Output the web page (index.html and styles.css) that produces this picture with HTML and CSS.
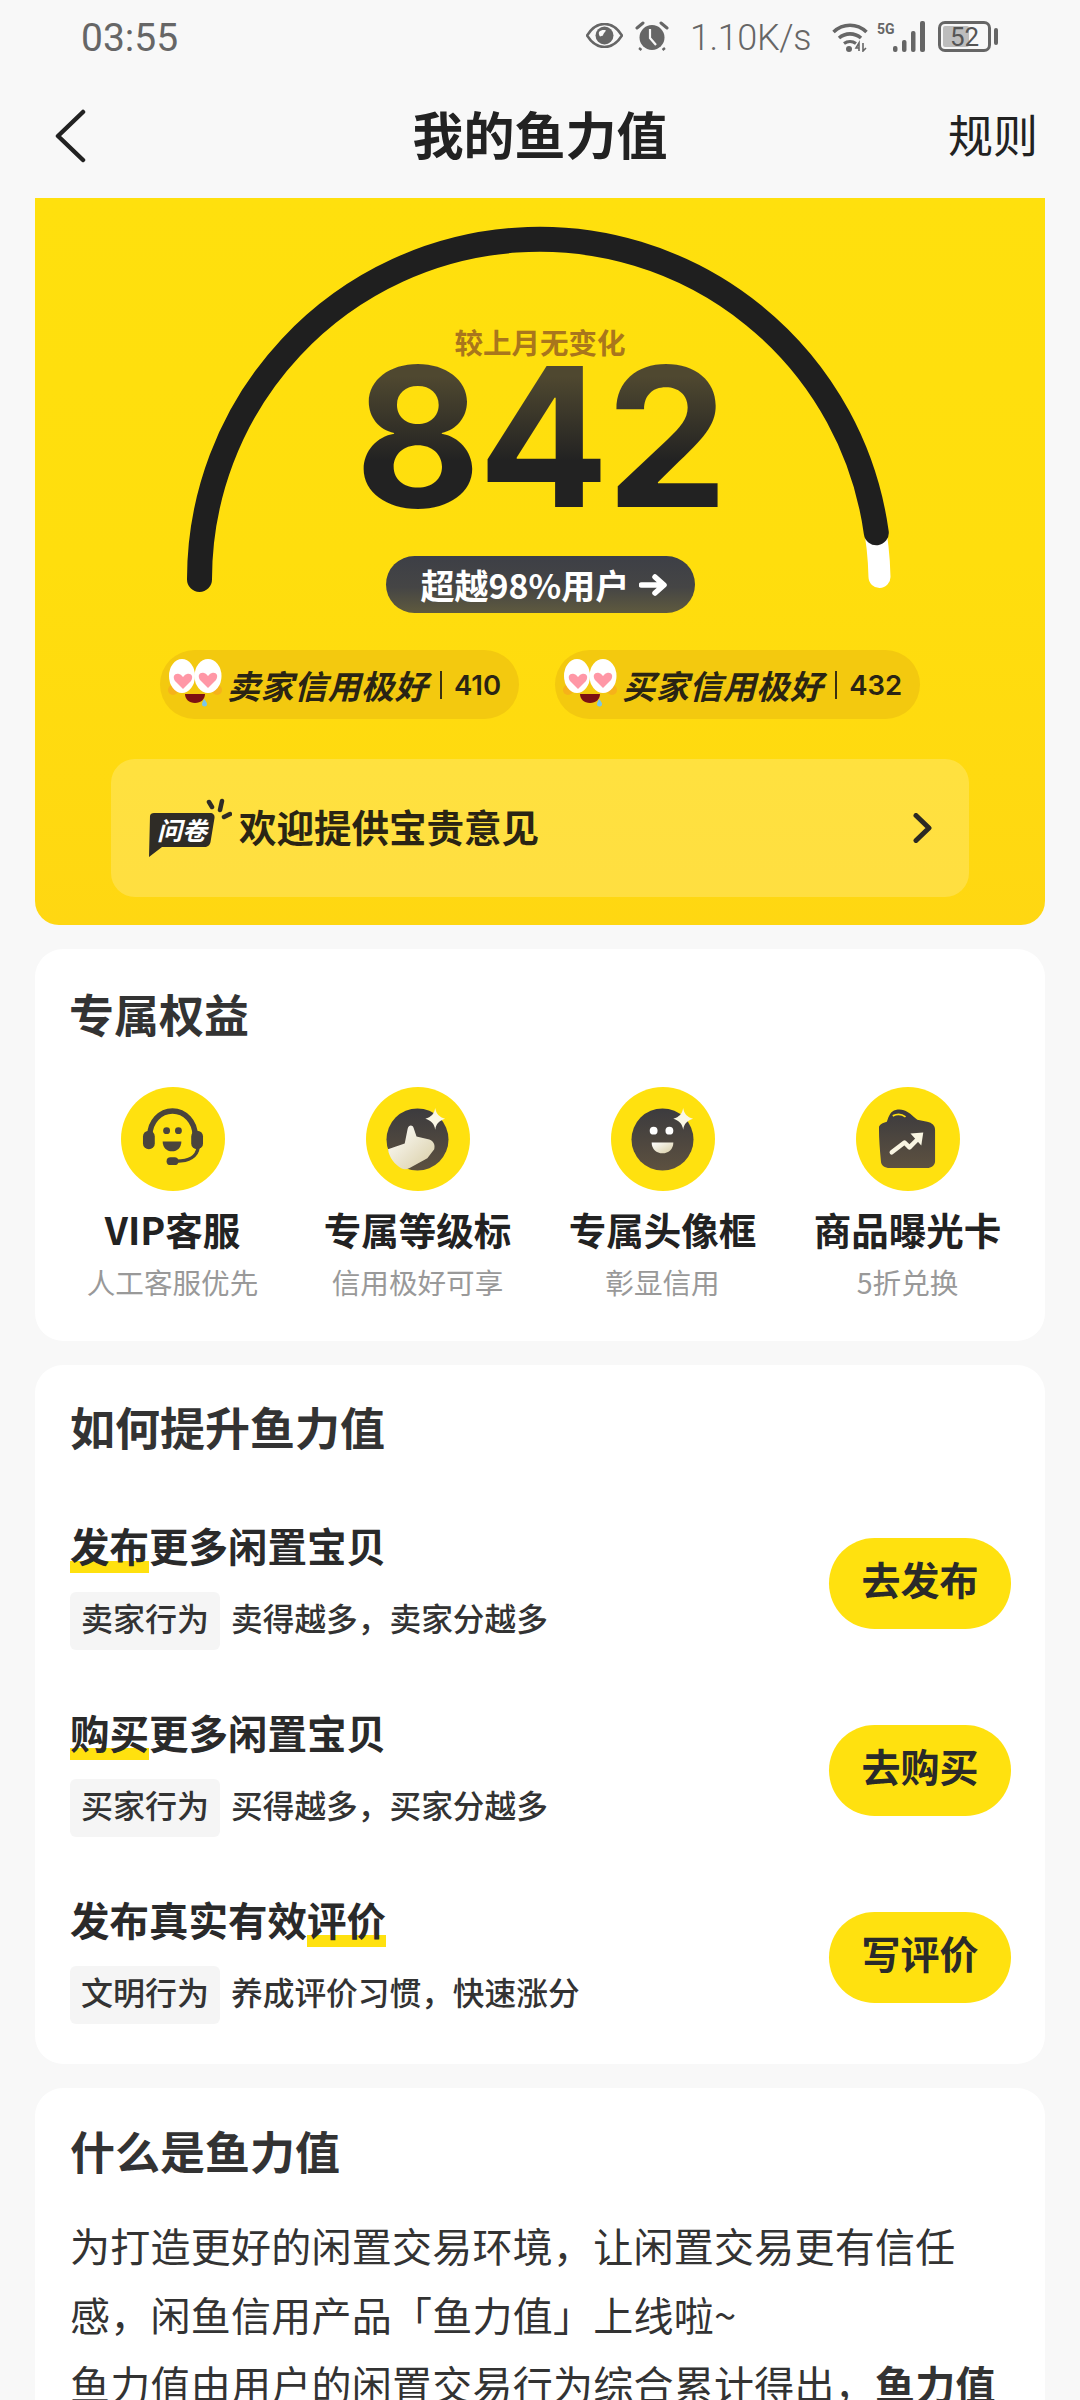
FILE: index.html
```html
<!DOCTYPE html>
<html lang="zh-CN">
<head>
<meta charset="utf-8">
<title>我的鱼力值</title>
<link rel="stylesheet" href="styles.css">
</head>
<body>
<div class="page">
  <div class="status">
    <span class="time">03:55</span>
    <div class="status-right">
      <svg class="ic-eye" viewBox="0 0 37 25"><path d="M1 12.500C6 4.500 12 1 18.500 1S31 4.500 36 12.500C31 20.500 25 24 18.500 24S6 20.500 1 12.500Z" fill="none" stroke="#666" stroke-width="2.600"/><circle cx="18.500" cy="12.500" r="9" fill="#666"/><path d="M13 9c2-2 5-2.500 7-1.500-1 2-3 3-3 5l-3 1c-1-1.500-1.500-3-1-4.500Z" fill="#f8f8f8"/></svg>
      <svg class="ic-alarm" viewBox="0 0 34 30"><circle cx="17" cy="16.500" r="12.500" fill="#666"/><path d="M2 7 8 2M32 7 26 2" stroke="#666" stroke-width="3" stroke-linecap="round"/><path d="M6 27 4.500 29M28 27l1.500 2" stroke="#666" stroke-width="3"/><path d="M15 8v9l6 7" fill="none" stroke="#f8f8f8" stroke-width="2.200"/></svg>
      <span class="speed">1.10K/s</span>
      <svg class="ic-wifi" viewBox="0 0 36 31"><path d="M1.500 11C11 2 25 2 34.500 11" fill="none" stroke="#666" stroke-width="3.600"/><path d="M7 17c6.500-5.500 15.500-5.500 22 0" fill="none" stroke="#666" stroke-width="3.600"/><path d="M12 22.500c3.500-2.500 8.500-2.500 12 0" fill="none" stroke="#666" stroke-width="3.200"/><circle cx="17" cy="28" r="3" fill="#666"/><path d="M27 30v-8l-3 5h3M31 22v8l3-3" fill="none" stroke="#666" stroke-width="1.600"/></svg>
      <div class="cell">
        <span class="five-g">5G</span>
        <svg class="ic-signal" viewBox="0 0 33 31"><rect x="0" y="25" width="4.500" height="6" rx="2" fill="#666"/><rect x="9" y="19" width="4.500" height="12" rx="2" fill="#666"/><rect x="18" y="10" width="4.500" height="21" rx="2" fill="#666"/><rect x="27" y="0" width="5" height="31" rx="2" fill="#666"/></svg>
      </div>
      <div class="battery"><div class="battery-fill" style="width:26px"></div><span class="battery-text">52</span></div>
      <span class="battery-nub"></span>
    </div>
  </div>

  <div class="nav">
    <svg class="back" viewBox="0 0 32 54"><path d="M29 3 4 27l25 24" fill="none" stroke="#222" stroke-width="4.500" stroke-linecap="round" stroke-linejoin="round"/></svg>
    <h1 class="nav-title">我的鱼力值</h1>
    <span class="nav-rule">规则</span>
  </div>

  <section class="hero">
    <div class="gauge">
      <svg class="gauge-arc" viewBox="0 0 1010 416">
        <path d="M844.500 379A340 340 0 0 0 838 320" fill="none" stroke="#fff" stroke-width="22" stroke-linecap="round"/>
        <path d="M164.500 381.500A340 340 0 0 1 841.300 334.800" fill="none" stroke="#1f1f1f" stroke-width="25" stroke-linecap="round"/>
      </svg>
      <div class="gauge-note">较上月无变化</div>
      <div class="gauge-score">842</div>
      <div class="gauge-pill"><span>超越98%用户</span><svg class="pill-arrow" viewBox="0 0 30 24"><path d="M2.500 12h22M16 4l9 8-9 8" fill="none" stroke="#fff" stroke-width="5.500" stroke-linecap="round" stroke-linejoin="round"/></svg></div>
    </div>
    <div class="badges">
      <div class="badge">
        <svg class="face" viewBox="0 0 54 48"><ellipse cx="5" cy="31" rx="5" ry="5" fill="#f6b21a"/><ellipse cx="49" cy="31" rx="5" ry="5" fill="#f6b21a"/><ellipse cx="14" cy="17" rx="13" ry="17" fill="#fff"/><ellipse cx="40" cy="17" rx="13.500" ry="17" fill="#fff"/><path d="M15 30 7 22C4 17 7 14 11 15c2 .500 3 2 4 3 1-1 2-2.500 4-3 4-1 7 2 4 7Z" fill="#ff97a6"/><path d="M40 29l-8-8c-3-5 0-8 4-7 2 .500 3 2 4 3 1-1 2-2.500 4-3 4-1 7 2 4 7Z" fill="#ff97a6"/><path d="M17 35h20c0 5-4 9-10 9s-10-4-10-9Z" fill="#7d1012"/><path d="M36 40c2 2 3 4 3 5a2.500 2.500 0 0 1-5 0c0-1 1-3 2-5Z" fill="#7cc6e8"/></svg>
        <span class="badge-name">卖家信用极好</span><span class="badge-sep"></span><span class="badge-num">410</span>
      </div>
      <div class="badge">
        <svg class="face" viewBox="0 0 54 48"><ellipse cx="5" cy="31" rx="5" ry="5" fill="#f6b21a"/><ellipse cx="49" cy="31" rx="5" ry="5" fill="#f6b21a"/><ellipse cx="14" cy="17" rx="13" ry="17" fill="#fff"/><ellipse cx="40" cy="17" rx="13.500" ry="17" fill="#fff"/><path d="M15 30 7 22C4 17 7 14 11 15c2 .500 3 2 4 3 1-1 2-2.500 4-3 4-1 7 2 4 7Z" fill="#ff97a6"/><path d="M40 29l-8-8c-3-5 0-8 4-7 2 .500 3 2 4 3 1-1 2-2.500 4-3 4-1 7 2 4 7Z" fill="#ff97a6"/><path d="M17 35h20c0 5-4 9-10 9s-10-4-10-9Z" fill="#7d1012"/><path d="M36 40c2 2 3 4 3 5a2.500 2.500 0 0 1-5 0c0-1 1-3 2-5Z" fill="#7cc6e8"/></svg>
        <span class="badge-name">买家信用极好</span><span class="badge-sep"></span><span class="badge-num">432</span>
      </div>
    </div>
    <div class="survey">
      <svg class="survey-icon" viewBox="0 0 84 60"><path d="M6 15h56c3 0 5 2 4.500 5l-4 24c-.500 3-3 5-6 5H14L1 59 2 18c0-2 2-3 4-3Z" fill="#2f2c26"/><text class="survey-icon-text" x="34" y="42" text-anchor="middle">问卷</text><path d="M64 9 61 4M72 12l2-9M76 19l6-3" fill="none" stroke="#2f2c26" stroke-width="4.500" stroke-linecap="round"/></svg>
      <span class="survey-text">欢迎提供宝贵意见</span>
      <svg class="survey-chevron" viewBox="0 0 20 30"><path d="M3 2.500 16 15 3 27.500" fill="none" stroke="#2b2a24" stroke-width="5" stroke-linecap="round" stroke-linejoin="round"/></svg>
    </div>
  </section>

  <section class="card card-benefits">
    <h2 class="card-title">专属权益</h2>
    <div class="benefits">
      <div class="benefit">
        <div class="benefit-circle">
          <svg class="benefit-ic" viewBox="0 0 64 64"><path d="M9 28A23 25 0 0 1 55 28" fill="none" stroke="#4a443c" stroke-width="5.500"/><rect x="2" y="23" width="12" height="19" rx="6" fill="#4a443c"/><rect x="51" y="23" width="12" height="19" rx="6" fill="#4a443c"/><path d="M58 40c-1 9-9 14-22 14" fill="none" stroke="#4a443c" stroke-width="3.500"/><rect x="26" y="50" width="12" height="8" rx="4" fill="#4a443c"/><circle cx="26" cy="23" r="3.500" fill="#4a443c"/><circle cx="38" cy="23" r="3.500" fill="#4a443c"/><path d="M22 34h19c0 6-4 10-9.500 10S22 40 22 34Z" fill="#4a443c"/></svg>
        </div>
        <div class="benefit-name">VIP客服</div>
        <div class="benefit-sub">人工客服优先</div>
      </div>
      <div class="benefit">
        <div class="benefit-circle">
          <svg class="benefit-ic" viewBox="0 0 64 64"><defs><linearGradient id="dk" x1="0" y1="0" x2="0" y2="1"><stop offset="0" stop-color="#3c3b3e"/><stop offset="1" stop-color="#5d5140"/></linearGradient><linearGradient id="lt" x1="0" y1="0" x2="1" y2="1"><stop offset="0" stop-color="#fff"/><stop offset="1" stop-color="#d8cda4"/></linearGradient></defs><circle cx="32" cy="32" r="31.500" fill="url(#dk)"/><path d="M2 42 19 36 22 21C23 17 27 17 28 20L31 29 44 32C49 34 50 38 49 42L42 51 24 61C21 62.500 18 62.500 16 61.500 9 58 3 50 2 42Z" fill="url(#lt)"/><path d="M50 0c1 6 4 9 10 11-6 2-9 5-10 11-1-6-4-9-10-11 6-2 9-5 10-11Z" fill="#fbf8e6"/></svg>
        </div>
        <div class="benefit-name">专属等级标</div>
        <div class="benefit-sub">信用极好可享</div>
      </div>
      <div class="benefit">
        <div class="benefit-circle">
          <svg class="benefit-ic" viewBox="0 0 64 64"><circle cx="32" cy="32" r="31.500" fill="url(#dk)"/><circle cx="23" cy="23" r="4" fill="#fff"/><circle cx="39" cy="23" r="4" fill="#fff"/><path d="M21 35h22c0 7-5 11-11 11s-11-4-11-11Z" fill="url(#lt)"/><path d="M53 0c1 6 4 9 10 11-6 2-9 5-10 11-1-6-4-9-10-11 6-2 9-5 10-11Z" fill="#fbf8e6"/></svg>
        </div>
        <div class="benefit-name">专属头像框</div>
        <div class="benefit-sub">彰显信用</div>
      </div>
      <div class="benefit">
        <div class="benefit-circle">
          <svg class="benefit-ic" viewBox="0 0 64 64"><path d="M11 14C13 8 15 3 20 2c5-1 9 0 12 2 4 2 7 6 10 8l10 2c5 1 8 4 8 8v32c0 4-4 7-8 7H14c-5 0-9-3-9-7-1-11-2-22-2-34 0-3 4-5 8-6Z" fill="url(#dk)"/><path d="M17 8c4-2 9-2 13 1" fill="none" stroke="#ffe10f" stroke-width="1.800"/><path d="M16 45 29 35l5 5 9-9" fill="none" stroke="#f9f5e2" stroke-width="4.500" stroke-linecap="round" stroke-linejoin="round"/><path d="M35 26 48 25 46 38Z" fill="#f9f5e2"/></svg>
        </div>
        <div class="benefit-name">商品曝光卡</div>
        <div class="benefit-sub">5折兑换</div>
      </div>
    </div>
  </section>

  <section class="card card-how">
    <h2 class="card-title">如何提升鱼力值</h2>
    <div class="tasks">
      <div class="task">
        <div class="task-main">
          <div class="task-title"><span class="mark">发布</span>更多闲置宝贝</div>
          <div class="task-line"><span class="tag">卖家行为</span><span class="task-desc">卖得越多，卖家分越多</span></div>
        </div>
        <div class="task-btn">去发布</div>
      </div>
      <div class="task">
        <div class="task-main">
          <div class="task-title"><span class="mark">购买</span>更多闲置宝贝</div>
          <div class="task-line"><span class="tag">买家行为</span><span class="task-desc">买得越多，买家分越多</span></div>
        </div>
        <div class="task-btn">去购买</div>
      </div>
      <div class="task">
        <div class="task-main">
          <div class="task-title">发布真实有效<span class="mark">评价</span></div>
          <div class="task-line"><span class="tag">文明行为</span><span class="task-desc">养成评价习惯，快速涨分</span></div>
        </div>
        <div class="task-btn">写评价</div>
      </div>
    </div>
  </section>

  <section class="card card-what">
    <h2 class="card-title">什么是鱼力值</h2>
    <p class="what-text">为打造更好的闲置交易环境，让闲置交易更有信任感，闲鱼信用产品「鱼力值」上线啦~<br>鱼力值由用户的闲置交易行为综合累计得出，<b>鱼力值</b></p>
  </section>
</div>
</body>
</html>
```
FILE: styles.css
```css
* { box-sizing: border-box; }
html, body { margin: 0; padding: 0; }
body {
  width: 1080px;
  height: 2400px;
  overflow: hidden;
  background: #f8f8f8;
  font-family: "Noto Sans CJK SC", "Noto Sans", sans-serif;
  color: #222;
}
.page { width: 1080px; height: 2400px; overflow: hidden; background: #f8f8f8; }

/* status bar */
.status {
  height: 76px;
  display: flex;
  align-items: flex-start;
  justify-content: space-between;
  padding: 16px 82px 0 81px;
}
.time { font: 400 39px/44px Roboto, sans-serif; color: #666; }
.status-right { display: flex; align-items: flex-start; padding-top: 5px; }
.ic-eye { width: 37px; height: 25px; margin-top: 2px; }
.ic-alarm { width: 34px; height: 30px; margin-left: 12px; }
.speed { font: 300 36px/34px Roboto, sans-serif; letter-spacing: -.4px; color: #666; margin-left: 21px; }
.ic-wifi { width: 36px; height: 31px; margin-left: 21px; }
.cell { display: flex; align-items: flex-start; margin-left: 9px; }
.five-g { font: 700 14px/12px Roboto, sans-serif; color: #666; width: 16px; margin-top: 2px; }
.ic-signal { width: 33px; height: 31px; }
.battery {
  width: 53px;
  height: 31px;
  margin-left: 12px;
  border: 3px solid #666;
  border-radius: 7px;
  padding: 2px;
  display: flex;
  position: relative;
}
.battery-fill { background: #bdbdbd; border-radius: 2px; }
.battery-text {
  position: absolute;
  left: 9px;
  top: -2px;
  font: 400 26px/30px Roboto, sans-serif;
  color: #555;
}
.battery-nub { width: 4px; height: 17px; margin: 7px 0 0 3px; background: #666; border-radius: 2px; }

/* nav */
.nav {
  height: 122px;
  position: relative;
  display: flex;
  align-items: center;
  justify-content: space-between;
  padding: 0 42px 0 54px;
}
.back { width: 32px; height: 54px; margin-top: -2px; }
.nav-title {
  margin: 0;
  position: absolute;
  left: 0;
  right: 0;
  top: 0;
  text-align: center;
  font-size: 51px;
  line-height: 114px;
  font-weight: 700;
  color: #222;
}
.nav-rule { font-size: 45px; line-height: 112px; margin-top: -6px; color: #222; }

/* hero */
.hero {
  margin: 0 35px;
  height: 727px;
  border-radius: 0 0 24px 24px;
  background: linear-gradient(180deg, #ffe00d 0%, #ffde0d 50%, #ffd712 100%);
  display: flex;
  flex-direction: column;
}
.gauge {
  position: relative;
  height: 416px;
  display: flex;
  flex-direction: column;
  align-items: center;
  padding-top: 126px;
}
.gauge-arc { position: absolute; left: 0; top: 0; width: 1010px; height: 416px; overflow: visible; }
.gauge-note { position: relative; font-size: 28.500px; line-height: 36px; font-weight: 700; color: #a9761c; }
.gauge-score {
  position: relative;
  font: 700 194px/160px Inter, Roboto, sans-serif;
  letter-spacing: -3px;
  margin-top: -3px;
  color: transparent;
  background: linear-gradient(180deg, #4f4830 12%, #222 65%);
  -webkit-background-clip: text;
  background-clip: text;
}
.gauge-pill {
  position: relative;
  margin-top: 39px;
  width: 309px;
  height: 57px;
  flex: none;
  border-radius: 29px;
  background: linear-gradient(180deg, #3d3f46 0%, #454545 55%, #5f5a3e 100%);
  color: #fff;
  font-size: 34px;
  line-height: 54px;
  font-weight: 700;
  display: flex;
  align-items: center;
  gap: 10px;
  padding-left: 35px;
}
.pill-arrow { width: 30px; height: 24px; }

.badges { display: flex; justify-content: center; gap: 36px; margin-top: 36px; }
.badge {
  height: 69px;
  border-radius: 35px;
  background: #f3c90f;
  display: flex;
  align-items: center;
  padding: 0 18px 0 8px;
}
.face { width: 54px; height: 48px; margin-top: -3px; flex: none; }
.badge-name {
  font-size: 33px;
  line-height: 38px;
  font-weight: 700;
  font-style: italic;
  letter-spacing: .5px;
  color: #2a2414;
  margin-left: 5px;
  white-space: nowrap;
}
.badge-sep { width: 2px; height: 28px; background: #3a3010; margin-left: 12px; }
.badge-num { font: 600 27.500px/40px Inter, sans-serif; color: #2a2414; margin-left: 12px; }

.survey {
  margin: 40px 76px 0;
  height: 138px;
  border-radius: 24px;
  background: rgba(255, 255, 255, .2);
  display: flex;
  align-items: center;
  padding: 0 36px 0 37px;
}
.survey-icon { width: 84px; height: 60px; flex: none; margin-top: -1px; }
.survey-icon-text { font-size: 25px; font-weight: 700; font-style: italic; fill: #fff; }
.survey-text { font-size: 37.500px; line-height: 48px; font-weight: 700; color: #2a2414; margin: -4px 0 0 7px; flex: 1; }
.survey-chevron { width: 20px; height: 30px; flex: none; }

/* cards */
.card { margin: 24px 35px 0; background: #fff; border-radius: 28px; }
.card-title { margin: 0; font-size: 45px; line-height: 42px; font-weight: 700; color: #333; padding-bottom: 4px; }
.card-benefits { height: 392px; padding: 44px 15px 0; }
.card-benefits .card-title { padding-left: 19px; }
.benefits { display: grid; grid-template-columns: repeat(4, 245px); margin-top: 48px; }
.benefit { display: flex; flex-direction: column; align-items: center; }
.benefit-circle {
  width: 104px;
  height: 104px;
  border-radius: 50%;
  background: #ffe10f;
  display: flex;
  align-items: center;
  justify-content: center;
}
.benefit-ic { width: 63px; height: 63px; overflow: visible; }
.benefit-name { margin-top: 16px; padding-bottom: 2px; font-size: 37.500px; line-height: 44px; font-weight: 700; color: #222; white-space: nowrap; }
.benefit-sub { margin-top: 9px; font-size: 28.600px; line-height: 40px; color: #999; white-space: nowrap; }

.card-how { height: 699px; padding: 41px 35px 0; }
.tasks { margin-top: 71px; display: flex; flex-direction: column; gap: 60px; }
.task { height: 127px; display: flex; align-items: center; justify-content: space-between; }
.task-main { display: flex; flex-direction: column; gap: 19px; }
.task-title { font-size: 39.500px; line-height: 44px; height: 50px; font-weight: 700; color: #2a2a2a; }
.mark { display: inline-block; height: 50px; background: linear-gradient(180deg, transparent 0 76%, #ffe10f 76% 100%); vertical-align: top; }
.task-line { display: flex; align-items: center; gap: 11px; }
.tag {
  height: 58px;
  width: 150px;
  background: #f5f5f5;
  border-radius: 6px;
  font-size: 32px;
  line-height: 50px;
  font-weight: 500;
  color: #333;
  text-align: center;
}
.task-desc { font-size: 31.700px; line-height: 51px; height: 58px; font-weight: 500; color: #333; }
.task-btn {
  width: 182px;
  height: 91px;
  margin-right: -1px;
  margin-top: -6px;
  border-radius: 46px;
  background: #ffe10f;
  font-size: 39px;
  line-height: 81px;
  font-weight: 700;
  color: #2a2a2a;
  text-align: center;
}

.card-what { padding: 42px 35px 0; height: 400px; }
.what-text { margin: 35px 0 0; font-size: 40px; letter-spacing: .25px; line-height: 69px; color: #333; }
.what-text b { font-weight: 700; }
```
